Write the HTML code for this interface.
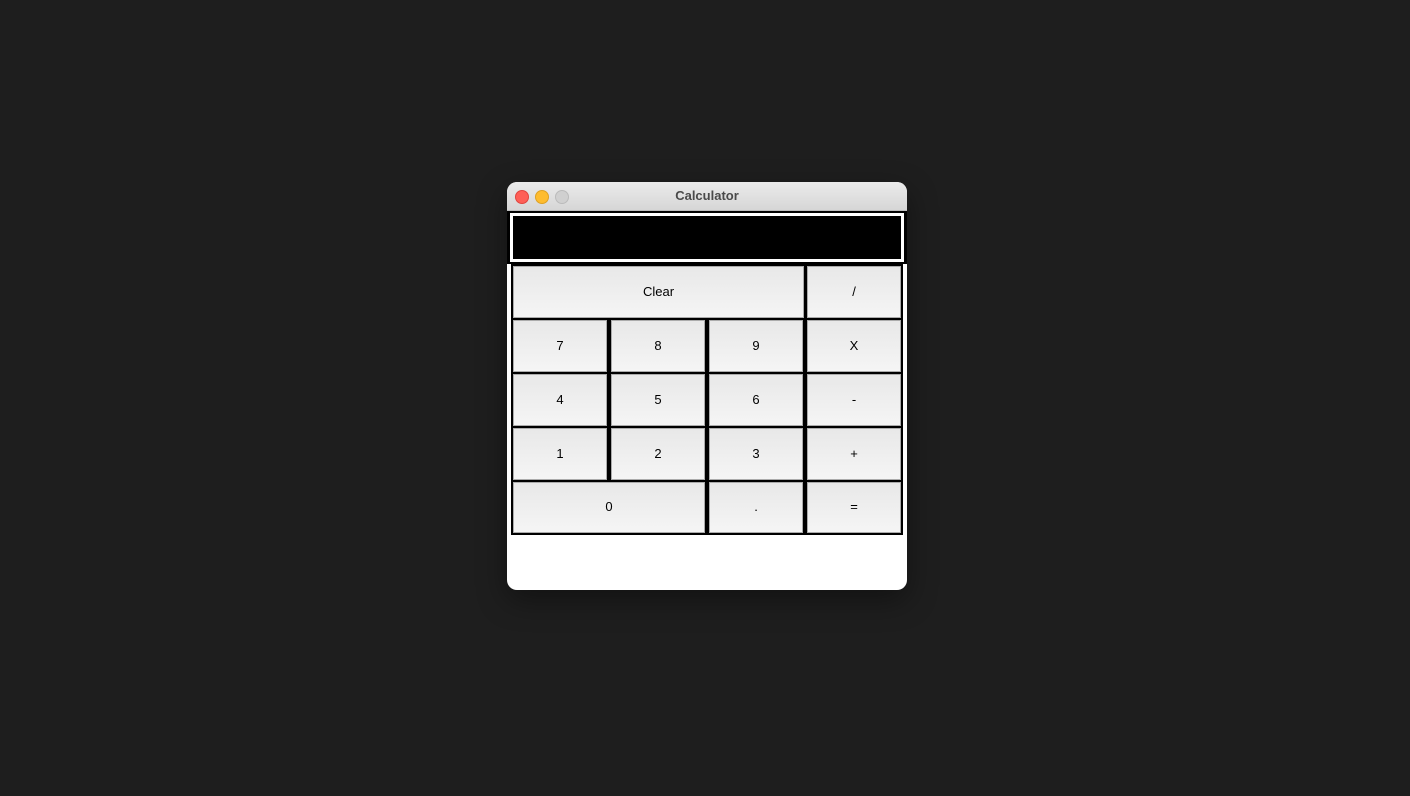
<!DOCTYPE html>
<html><head><style>
body{margin:0;width:1410px;height:796px;background:#1e1e1e;position:relative;font-family:"Liberation Sans",sans-serif;overflow:hidden}
.win{position:absolute;left:507px;top:182px;width:400px;height:408px;background:#fff;border-radius:10px;overflow:hidden;box-shadow:0 10px 30px rgba(0,0,0,.4)}
.tb{position:absolute;left:0;top:0;width:400px;height:28px;background:linear-gradient(#ebebeb,#d6d6d6);border-bottom:1px solid #bdbdbd;text-align:center;line-height:27px;font-weight:bold;font-size:13px;color:#4a4a4a;z-index:2}
.dot{position:absolute;top:8px;width:12px;height:12px;border-radius:50%}
.dback{position:absolute;left:0;top:28px;width:400px;height:54px;background:#000}
.disp{position:absolute;left:3px;top:31px;width:388px;height:43px;background:#000;border:3px solid #fff}
.grid{position:absolute;left:4px;top:82px;width:392px;height:271px;background:#000}
.b{position:absolute;box-sizing:border-box;border:1px solid #ababab;background:linear-gradient(#e8e8e8,#f5f5f5);font-size:13px;color:#000;display:flex;align-items:center;justify-content:center;padding-bottom:2px}
</style></head><body>
<div class="win">
<div class="tb">Calculator
<div class="dot" style="left:8px;background:#fe5f57;border:0.5px solid #e0443e"></div>
<div class="dot" style="left:28px;background:#febc2e;border:0.5px solid #dea123"></div>
<div class="dot" style="left:48px;background:#d0d0d0;border:0.5px solid #bbb"></div>
</div>
<div class="dback"></div>
<div class="disp"></div>
<div class="grid">
<div class="b" style="left:2px;top:2px;width:291px;height:52px">Clear</div>
<div class="b" style="left:296px;top:2px;width:94px;height:52px">/</div>
<div class="b" style="left:2px;top:56px;width:94px;height:52px">7</div>
<div class="b" style="left:100px;top:56px;width:94px;height:52px">8</div>
<div class="b" style="left:198px;top:56px;width:94px;height:52px">9</div>
<div class="b" style="left:296px;top:56px;width:94px;height:52px">X</div>
<div class="b" style="left:2px;top:110px;width:94px;height:52px">4</div>
<div class="b" style="left:100px;top:110px;width:94px;height:52px">5</div>
<div class="b" style="left:198px;top:110px;width:94px;height:52px">6</div>
<div class="b" style="left:296px;top:110px;width:94px;height:52px">-</div>
<div class="b" style="left:2px;top:164px;width:94px;height:52px">1</div>
<div class="b" style="left:100px;top:164px;width:94px;height:52px">2</div>
<div class="b" style="left:198px;top:164px;width:94px;height:52px">3</div>
<div class="b" style="left:296px;top:164px;width:94px;height:52px">+</div>
<div class="b" style="left:2px;top:218px;width:192px;height:51px">0</div>
<div class="b" style="left:198px;top:218px;width:94px;height:51px">.</div>
<div class="b" style="left:296px;top:218px;width:94px;height:51px">=</div>
</div>
</div>
</body></html>
